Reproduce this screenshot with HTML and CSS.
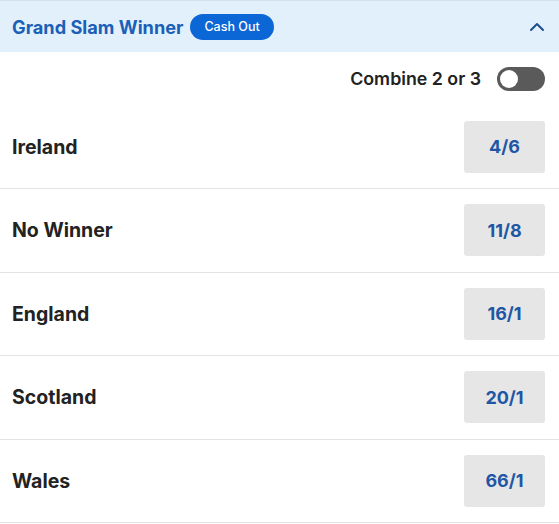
FILE: index.html
```html
<!DOCTYPE html>
<html>
<head>
<meta charset="utf-8">
<link rel="stylesheet" href="styles.css">
</head>
<body>
<div class="market">
  <div class="header">
    <div class="title-group">
      <span class="title">Grand Slam Winner</span>
      <span class="pill">Cash Out</span>
    </div>
    <svg class="chevron" width="16" height="10" viewBox="0 0 16 10"><path d="M2 8 L8 2 L14 8" fill="none" stroke="#1d4f8f" stroke-width="2" stroke-linecap="round" stroke-linejoin="round"/></svg>
  </div>
  <div class="combine">
    <span class="combine-label">Combine 2 or 3</span>
    <span class="toggle"><span class="knob"></span></span>
  </div>
  <div class="row"><span class="name">Ireland</span><span class="odds">4/6</span></div>
  <div class="row"><span class="name">No Winner</span><span class="odds">11/8</span></div>
  <div class="row"><span class="name">England</span><span class="odds">16/1</span></div>
  <div class="row"><span class="name">Scotland</span><span class="odds">20/1</span></div>
  <div class="row"><span class="name">Wales</span><span class="odds">66/1</span></div>
</div>
</body>
</html>
```
FILE: styles.css
```css
* { box-sizing: border-box; }
body {
  margin: 0;
  background: #fff;
  font-family: Inter, "Liberation Sans", sans-serif;
}
.market { width: 559px; }
.header {
  height: 52px;
  background: #e2f0fc;
  border-top: 1px solid #d6e3ef;
  display: flex;
  align-items: center;
  justify-content: space-between;
  padding: 0 14px 0 12px;
}
.title-group { display: flex; align-items: center; gap: 7px; }
.title {
  color: #1b5fb8;
  font-weight: 700;
  font-size: 18.2px;
}
.pill {
  background: #0b66d6;
  color: #fff;
  font-size: 12.5px;
  font-weight: 500;
  height: 26px;
  line-height: 26px;
  padding: 0 14px;
  border-radius: 13px;
}
.chevron { display: block; }
.combine {
  height: 53.5px;
  display: flex;
  align-items: center;
  justify-content: flex-end;
  gap: 16px;
  padding-right: 14px;
}
.combine-label {
  font-weight: 600;
  font-size: 17.8px;
  color: #222;
}
.toggle {
  width: 48px;
  height: 24px;
  border-radius: 12px;
  background: #5a5a5a;
  display: flex;
  align-items: center;
  padding-left: 3px;
}
.knob {
  width: 18px;
  height: 18px;
  border-radius: 50%;
  background: #fff;
}
.row {
  height: 83.5px;
  display: flex;
  align-items: center;
  justify-content: space-between;
  padding: 0 14px 0 12px;
  border-bottom: 1px solid #e2e2e2;
}
.name {
  font-weight: 700;
  font-size: 19.5px;
  color: #222;
}
.odds {
  width: 81px;
  height: 52px;
  background: #e6e6e6;
  border-radius: 3px;
  display: flex;
  align-items: center;
  justify-content: center;
  color: #1f56a5;
  font-weight: 700;
  font-size: 18px;
}
```
